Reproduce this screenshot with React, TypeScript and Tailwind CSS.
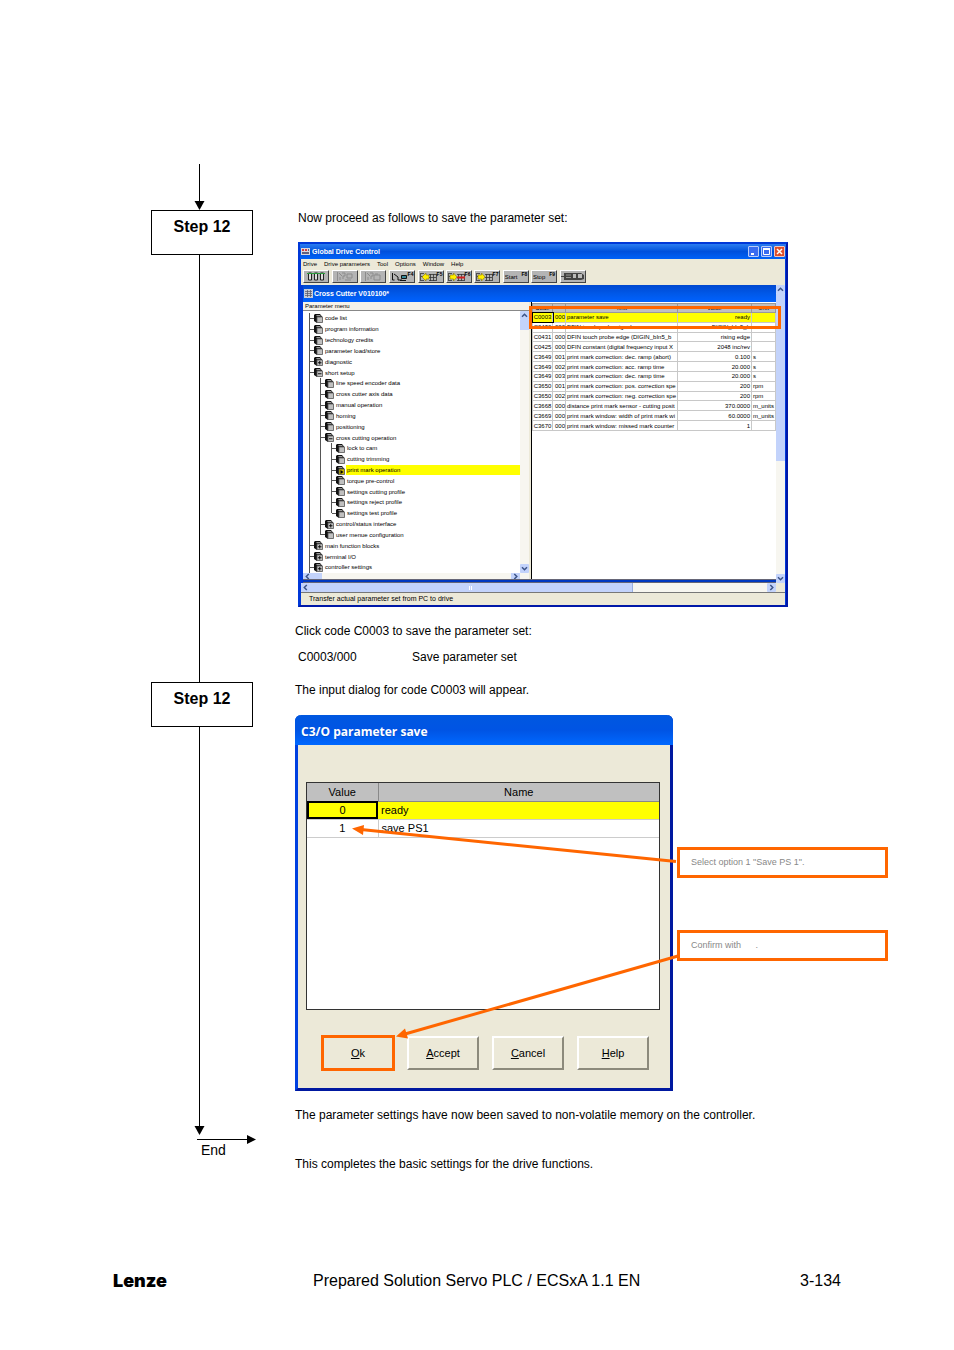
import { ReactNode } from 'react';

type TreeNode = { label: string; depth: number; sign?: '+' | '-'; last?: boolean; active?: boolean };

const tree: TreeNode[] = [
    { label: 'code list', depth: 0 },
    { label: 'program information', depth: 0 },
    { label: 'technology credits', depth: 0 },
    { label: 'parameter load/store', depth: 0 },
    { label: 'diagnostic', depth: 0, sign: '+' },
    { label: 'short setup', depth: 0, sign: '-' },
    { label: 'line speed encoder data', depth: 1 },
    { label: 'cross cutter axis data', depth: 1 },
    { label: 'manual operation', depth: 1 },
    { label: 'homing', depth: 1 },
    { label: 'positioning', depth: 1 },
    { label: 'cross cutting operation', depth: 1, sign: '-' },
    { label: 'lock to cam', depth: 2 },
    { label: 'cutting trimming', depth: 2 },
    { label: 'print mark operation', depth: 2, active: true },
    { label: 'torque pre-control', depth: 2 },
    { label: 'settings cutting profile', depth: 2 },
    { label: 'settings reject profile', depth: 2 },
    { label: 'settings test profile', depth: 2, last: true },
    { label: 'control/status interface', depth: 1, sign: '+' },
    { label: 'user menue configuration', depth: 1, last: true },
    { label: 'main function blocks', depth: 0, sign: '+' },
    { label: 'terminal I/O', depth: 0, sign: '+' },
    { label: 'controller settings', depth: 0, sign: '+' },
];

const codes = [
    ['C0003', '000', 'parameter save', 'ready', ''],
    ['C0430', '000', 'DFIN touch probe signal source', 'DIGIN_bIn5_b', ''],
    ['C0431', '000', 'DFIN touch probe edge (DIGIN_bIn5_b', 'rising edge', ''],
    ['C0425', '000', 'DFIN constant (digital frequency input X', '2048 inc/rev', ''],
    ['C3649', '001', 'print mark correction: dec. ramp (abort)', '0.100', 's'],
    ['C3649', '002', 'print mark correction: acc. ramp time', '20.000', 's'],
    ['C3649', '003', 'print mark correction: dec. ramp time', '20.000', 's'],
    ['C3650', '001', 'print mark correction: pos. correction spe', '200', 'rpm'],
    ['C3650', '002', 'print mark correction: neg. correction spe', '200', 'rpm'],
    ['C3668', '000', 'distance print mark sensor - cutting posit', '370.0000', 'm_units'],
    ['C3669', '000', 'print mark window: width of print mark wi', '60.0000', 'm_units'],
    ['C3670', '000', 'print mark window: missed mark counter', '1', ''],
];

const menus = ['Drive', 'Drive parameters', 'Tool', 'Options', 'Window', 'Help'];

// ---------------- Flow chart column ---------------- //
function ArrowDown() {
    return <div className="flex flex-1 flex-col items-center pr-[6px]">
        <div className="w-px flex-1 bg-black" />
        <svg className="block" width="11" height="9" viewBox="0 0 11 9"><path d="M0.5 0h10L5.5 9z" /></svg>
    </div>;
}

function StepBox({ children }: { children: ReactNode }) {
    return <h2 className="h-[45px] border border-black pt-[6px] text-center text-base leading-5 font-bold">{children}</h2>;
}

// ---------------- Window parts ---------------- //
const chevrons = {
    up: 'M1 4.8L3.5 2.3L6 4.8',
    down: 'M1 2.3L3.5 4.8L6 2.3',
    left: 'M4.8 1L2.3 3.5L4.8 6',
    right: 'M2.3 1L4.8 3.5L2.3 6',
};

function ScrollButton({ to }: { to: keyof typeof chevrons }) {
    return <button type="button" aria-label={'Scroll ' + to} className="flex size-[9px] shrink-0 items-center justify-center rounded-[1px] bg-[#c3d3fb]">
        <svg width="7" height="7" viewBox="0 0 7 7" fill="none" stroke="#3c5488" strokeWidth="1.5"><path d={chevrons[to]} /></svg>
    </button>;
}

function NodeIcon({ sign, active }: { sign?: string; active?: boolean }) {
    return <svg className="shrink-0" width="9" height="9" viewBox="0 0 9 9">
        <path d="M0 1L1 0h5l2 2.500v1H3V9L0 7z" fill="#111" />
        <path d="M2 1h4l1 1.200H3z" fill="#999" />
        <rect x="3" y="3" width="5.500" height="5.500" fill={active ? '#c8b800' : '#c0c0c0'} stroke="#555" strokeWidth=".8" />
        {sign && <path d={sign === '+' ? 'M4 5.750h3.500M5.750 4v3.500' : 'M4 5.750h3.500'} stroke="#000" strokeWidth=".9" />}
        {active && <path d="M4.500 4v4l3-2z" fill="#000" />}
    </svg>;
}

function TreeRow({ node }: { node: TreeNode }) {
    return <li className="flex min-h-0 flex-1 items-center pl-[6px]">
        {Array.from({ length: node.depth }, (_, i) => (
            <span key={i} className="w-[11px] shrink-0 self-stretch border-l border-[#555]" />
        ))}
        <span className="flex w-[5px] shrink-0 self-stretch">
            <span className={(node.last ? 'h-1/2' : 'h-full') + ' w-px bg-[#555]'} />
            <span className="h-px w-1 self-center bg-[#555]" />
        </span>
        <NodeIcon sign={node.sign} active={node.active} />
        <span className={(node.active ? 'flex-1 bg-[#ffff00] ' : '') + 'ml-px pl-px leading-[10px] whitespace-nowrap'}>{node.label}</span>
    </li>;
}

function ToolButton({ label, children }: { label: string; children: ReactNode }) {
    return <button type="button" aria-label={label} className="flex h-[13px] w-[26px] items-center justify-center border border-t-white border-r-[#444] border-b-[#444] border-l-white bg-[#b4b4b4]">
        {children}
    </button>;
}

function FKey({ children }: { children: ReactNode }) {
    return <span className="shrink-0 self-start text-[5px] leading-[6px] font-bold">{children}</span>;
}

function GridIcon({ arrow, fkey, red }: { arrow: string; fkey: string; red?: boolean }) {
    return <>
        <svg className="shrink-0" width="17" height="10" viewBox="0 0 17 10" fill="none">
            <path d="M.5 1v8M1 1.500h3M1 4.500h2M1 8.500h3M9 2.500h7M9 5.500h7M9 8.500h7M10.500 2v7M13.500 2v7M16.500 2v7" stroke="#333" strokeWidth=".8" />
            {red && <path d="M9 5.500h8" stroke="#d02020" strokeWidth="2" />}
            <path d={arrow} fill="#ffee00" stroke="#776600" strokeWidth=".5" />
        </svg>
        <FKey>{fkey}</FKey>
    </>;
}

function Toolbar() {
    return <div className="flex h-[17px] items-center gap-[3px] bg-[#ece9d8] pl-[2px]">
        <ToolButton label="Drives">
            <svg width="18" height="9" viewBox="0 0 18 9" fill="none"><path d="M1.500 1v7h3V1zM7.500 1v7h3V1zM13.500 1v7h3V1z" fill="#ddd" stroke="#222" /><path d="M0 1.500h18" stroke="#2c9a3c" /></svg>
        </ToolButton>
        <div className="flex gap-[2px]">
            <ToolButton label="Find drive">
                <svg width="18" height="9" viewBox="0 0 18 9" fill="none" stroke="#8c8c8c"><path d="M1.500 0v9M3 1l3 3M4 8V5M6 1h3v3H7v3M11 2h5v4h-5zM9 8h6" /></svg>
            </ToolButton>
            <ToolButton label="Find file">
                <svg width="18" height="9" viewBox="0 0 18 9" fill="none" stroke="#8c8c8c"><path d="M1.500 0v9M3 1l3 3M4 8V5M6 1h3v3H7v3M10 3h6v5h-6zM11 2h3" /></svg>
            </ToolButton>
        </div>
        <ToolButton label="Connect">
            <svg className="shrink-0" width="17" height="10" viewBox="0 0 17 10" fill="none"><path d="M1.500 1v7h2M3 2l4 3v3h4" stroke="#111" /><path d="M10.500 3.500h5v3h-5z" fill="#3a8a9a" stroke="#111" /><path d="M9 8.500h6" stroke="#111" /></svg>
            <FKey>F4</FKey>
        </ToolButton>
        <div className="flex gap-[2px]">
            <ToolButton label="Read code"><GridIcon fkey="F5" arrow="M2 5l4-4v2h3v4H6v2z" /></ToolButton>
            <ToolButton label="Write code"><GridIcon fkey="F6" red arrow="M9 5L5.500 1v2H2v4h3.500v2z" /></ToolButton>
            <ToolButton label="Write all"><GridIcon fkey="F7" arrow="M9 5L5.500 1v2H2v4h3.500v2z" /></ToolButton>
        </div>
        <div className="flex gap-[2px]">
            <ToolButton label="Start"><span className="mr-1">Start</span><FKey>F8</FKey></ToolButton>
            <ToolButton label="Stop"><span className="mr-1">Stop</span><FKey>F9</FKey></ToolButton>
        </div>
        <ToolButton label="Motor">
            <svg width="24" height="9" viewBox="0 0 24 9"><path d="M0 4h3V1h17l3 2v4l-3 1H3V5H0z" fill="#444" /><path d="M5 3h5M5 5.500h5" stroke="#999" /><path d="M12 2h3v4h-3zM17 2h4v4h-4z" fill="#bbb" /></svg>
        </ToolButton>
    </div>;
}

function TreePane() {
    return <div className="flex w-[226px] shrink-0 flex-col bg-white">
        <div className="h-[9px] border-b border-[#888] bg-[#f4f2ea] pl-[2px] leading-[8px]">Parameter menu</div>
        <div className="flex h-[262px]">
            <ul className="flex min-w-0 flex-1 flex-col overflow-hidden pt-[2px]">
                {tree.map(node => <TreeRow key={node.label} node={node} />)}
            </ul>
            <div className="flex w-[9px] flex-col bg-[#f7f6f0]">
                <ScrollButton to="up" />
                <div className="h-[10px] bg-[#c3d3fb]" />
                <div className="flex-1" />
                <ScrollButton to="down" />
            </div>
        </div>
        <div className="flex h-[6px] items-center overflow-hidden bg-[#f7f6f0]">
            <ScrollButton to="left" />
            <div className="h-full w-[10px] bg-[#c3d3fb]" />
            <div className="flex-1" />
            <ScrollButton to="right" />
            <div className="w-[9px]" />
        </div>
    </div>;
}

function CodePane() {
    return <div className="relative min-w-0 flex-1 bg-white pt-px">
        <table className="h-[128px] w-full table-fixed border-collapse leading-[8px]">
            <colgroup>
                <col className="w-[20px]" /><col className="w-[13px]" /><col className="w-[112px]" /><col /><col className="w-[24px]" />
            </colgroup>
            <thead>
                <tr className="bg-[#c0c0c0]">
                    {['Code', '', 'Text', 'Value', 'Unit'].map((title, i) => (
                        <th key={i} className="border border-[#999] p-0 font-normal">{title}</th>
                    ))}
                </tr>
            </thead>
            <tbody>
                {codes.map((row, r) => (
                    <tr key={r} className={r === 0 ? 'bg-[#ffff00]' : ''}>
                        {row.map((cell, c) => (
                            <td key={c} className={(c === 1 ? 'text-right ' : '') + (c === 3 ? 'pr-px text-right ' : '') + (c === 2 || c === 4 ? 'pl-px ' : '') + (c === 0 ? 'text-center ' : '') + (r === 0 && c === 0 ? 'outline outline-black ' : '') + 'border border-[#c8c8c8] py-0 whitespace-nowrap'}>{cell}</td>
                        ))}
                    </tr>
                ))}
            </tbody>
        </table>
        {/* highlight around code C0003 */}
        <div className="absolute top-[4px] -right-[5px] -left-[3px] h-[23px] border-3 border-[#ff6600]" />
    </div>;
}

function DriveControlWindow() {
    return <div className="ml-[3px] w-full max-w-[490px] border-2 border-[#0038d8] border-r-[#0018a8] border-b-[#0018a8] bg-[#0038d8] text-[6px]">
        <div className="flex h-[15px] items-center gap-[2px] bg-linear-to-b from-[#2a7cf0] via-[#0050dc] to-[#0062f8] pl-px text-[7px] font-bold text-white">
            <svg width="9" height="9" viewBox="0 0 9 9"><path d="M0 1h9v7H0z" fill="#d8d8e0" /><path d="M1 2h2v2H1zM4 2h2v2H4z" fill="#d04040" /><path d="M7 2h1v2H7zM1 5h7v2H1z" fill="#606080" /></svg>
            <span className="flex-1">Global Drive Control</span>
            <div className="flex gap-[2px] pr-px">
                <button type="button" aria-label="Minimize" className="size-[11px] rounded-[1px] border border-[#b8ccf8] bg-[#3a6cf0]"><svg width="9" height="9" viewBox="0 0 9 9"><path d="M2 6h3v2H2z" fill="#fff" /></svg></button>
                <button type="button" aria-label="Maximize" className="size-[11px] rounded-[1px] border border-[#b8ccf8] bg-[#3a6cf0]"><svg width="9" height="9" viewBox="0 0 9 9"><path d="M1.500 2h6v5.500h-6z" fill="none" stroke="#fff" /><path d="M1 2h7" stroke="#fff" strokeWidth="2" /></svg></button>
                <button type="button" aria-label="Close" className="size-[11px] rounded-[1px] border border-[#f0c8c0] bg-[#e0502c]"><svg width="9" height="9" viewBox="0 0 9 9"><path d="M2 2l5 5M7 2L2 7" stroke="#fff" strokeWidth="1.500" /></svg></button>
            </div>
        </div>
        <div className="mx-px">
            <nav className="flex h-[9px] items-center gap-[7px] bg-[#ece9d8] pl-[2px]">
                {menus.map(menu => <a key={menu} href="#">{menu}</a>)}
            </nav>
            <Toolbar />
            <div className="flex">
                <div className="min-w-0 flex-1 pl-[2px]">
                    <div className="flex h-[17px] items-center gap-px bg-linear-to-b from-[#0048d0] via-[#0058e8] to-[#0062ff] pl-px text-[7px] font-bold text-white">
                        <svg width="9" height="9" viewBox="0 0 9 9"><path d="M0 0h9v9H0z" fill="#c8ccd8" /><path d="M1 2.500h7M1 4.500h7M1 6.500h7M3.500 1v7M6.500 1v7" stroke="#556" strokeWidth=".7" /></svg>
                        <span>Cross Cutter V010100*</span>
                    </div>
                    <div className="flex">
                        <TreePane />
                        <div className="w-[3px] border-r border-black bg-[#ece9d8]" />
                        <CodePane />
                    </div>
                    <div className="h-[4px] border-y border-[#667] bg-[#0038c0]" />
                </div>
                <div className="flex w-[9px] flex-col bg-[#f7f6f0]">
                    <ScrollButton to="up" />
                    <div className="h-[167px] bg-[#c3d3fb]" />
                    <div className="flex-1" />
                    <ScrollButton to="down" />
                </div>
            </div>
            <div className="flex h-[9px] bg-[#f7f6f0]">
                <ScrollButton to="left" />
                <div className="flex w-2/3 items-center justify-center gap-px border-r border-[#9ab0e0] bg-[#c3d3fb]">
                    <span className="h-1 w-px bg-white" /><span className="h-1 w-px bg-white" />
                </div>
                <div className="flex-1" />
                <ScrollButton to="right" />
                <div className="w-[9px] bg-[#ece9d8]" />
            </div>
            <div className="h-[13px] border-t border-[#777] bg-[#ece9d8] pl-[8px] text-[7px] leading-[12px]">Transfer actual parameter set from PC to drive</div>
        </div>
    </div>;
}

// ---------------- Input dialog ---------------- //
function DialogButton({ text, highlighted }: { text: string; highlighted?: boolean }) {
    return <button type="button" className={(highlighted ? 'outline-3 -outline-offset-2 outline-[#ff6600] ' : '') + 'h-[34px] w-[72px] border-2 border-t-white border-r-[#8c8a7c] border-b-[#8c8a7c] border-l-white'}>
        <span className="underline">{text[0]}</span>{text.slice(1)}
    </button>;
}

function SaveDialog() {
    return <div className="w-[378px] shrink-0 rounded-t-[6px] border-3 border-t-0 border-[#0040e0] border-r-[#0018a0] border-b-[#0018a0] bg-[#ece9d8] text-[11px] leading-4">
        <div className="-mx-[3px] flex h-[30px] items-center rounded-t-[6px] bg-linear-to-b from-[#0058e0] via-[#0054e4] to-[#0068ff] pt-1 pl-[6px] font-['Open_Sans',sans-serif] text-xs font-bold text-white text-shadow-2xs">C3/O parameter save</div>
        <div className="pt-[37px] pr-[10px] pb-[18px] pl-[8px]">
            <div className="h-[228px] border border-[#333] bg-white">
                <table className="w-full table-fixed border-collapse">
                    <thead>
                        <tr className="h-[18px] bg-[#c0c0c0]">
                            <th className="w-[71px] border-r border-b border-[#888] p-0 font-normal">Value</th>
                            <th className="border-b border-[#888] p-0 font-normal">Name</th>
                        </tr>
                    </thead>
                    <tbody>
                        <tr className="h-[18px] bg-[#ffff00]">
                            <td className="border-b border-[#ccc] p-0 text-center outline-2 -outline-offset-2 outline-black">0</td>
                            <td className="border-b border-[#ccc] p-0 pl-[3px]">ready</td>
                        </tr>
                        <tr className="h-[18px]">
                            <td className="border-r border-b border-[#ccc] p-0 text-center">1</td>
                            <td className="border-b border-[#ccc] p-0 pl-[3px]">save PS1</td>
                        </tr>
                    </tbody>
                </table>
            </div>
            <div className="mt-[26px] flex gap-[13px] pl-[16px]">
                <DialogButton text="Ok" highlighted />
                <DialogButton text="Accept" />
                <DialogButton text="Cancel" />
                <DialogButton text="Help" />
            </div>
        </div>
    </div>;
}

function Callout({ children }: { children: ReactNode }) {
    return <p className="h-[31px] border-3 border-[#ff6600] bg-white pl-[11px] text-[9px] leading-[25px] text-[#888]">{children}</p>;
}

function DialogFigure() {
    return <div className="relative flex gap-1">
        <SaveDialog />
        <div className="flex max-w-[211px] flex-1 flex-col gap-[52px] pt-[132px]">
            <Callout>Select option 1 "Save PS 1".</Callout>
            <Callout>Confirm with <span className="inline-block w-[12px]" />.</Callout>
        </div>
        {/* pointers from the callouts into the dialog */}
        <svg className="pointer-events-none absolute top-0 left-0" width="384" height="376" viewBox="0 0 384 376" fill="#ff6600">
            <path d="M381 146.500L66 114.500M383 241L110 319" fill="none" stroke="#ff6600" strokeWidth="3" />
            <path d="M57 113.500L69 110L68 120zM101 321.500L110 313.500L113 323.500z" />
        </svg>
    </div>;
}

function Footer() {
    return <footer className="mt-[99px] flex items-center px-[113px] text-base leading-5">
        <span className="w-[200px] font-['Inter',sans-serif] text-lg leading-4 font-black">Lenze</span>
        <span className="flex-1">Prepared Solution Servo PLC / ECSxA 1.1 EN</span>
        <span>3-134</span>
    </footer>;
}

function App() {
    return (
        <div className="min-h-screen bg-white pt-[164px] font-['Liberation_Sans',Arial,sans-serif] text-black">
            <main className="grid grid-cols-[102px_1fr] gap-x-[42px] pr-[66px] pl-[151px]">
                <div className="flex flex-col">
                    <div className="flex h-[46px]"><ArrowDown /></div>
                    <StepBox>Step 12</StepBox>
                    <div className="flex flex-1 justify-center pr-[6px]"><div className="w-px bg-black" /></div>
                </div>
                <section className="pt-[44px] text-xs leading-5">
                    <p className="mb-[14px] pl-[3px]">Now proceed as follows to save the parameter set:</p>
                    <DriveControlWindow />
                    <p className="mt-[14px]">Click code C0003 to save the parameter set:</p>
                    <dl className="mt-[6px] mb-[15px] grid grid-cols-[114px_1fr] pl-[3px]">
                        <dt>C0003/000</dt><dd>Save parameter set</dd>
                    </dl>
                </section>
                <div className="flex flex-col">
                    <StepBox>Step 12</StepBox>
                    <div className="flex flex-1"><ArrowDown /></div>
                    <div className="ml-[46px] flex w-[59px] items-center">
                        <div className="h-px flex-1 bg-black" />
                        <svg width="9" height="9" viewBox="0 0 9 9"><path d="M0 0v9l9-4.500z" /></svg>
                    </div>
                    <p className="mb-[16px] pl-[50px] text-sm leading-3">End</p>
                </div>
                <section className="text-xs leading-4">
                    <p className="mb-[17px]">The input dialog for code C0003 will appear.</p>
                    <DialogFigure />
                    <p className="mt-[16px]">The parameter settings have now been saved to non-volatile memory on the controller.</p>
                    <p className="mt-[33px]">This completes the basic settings for the drive functions.</p>
                </section>
            </main>
            <Footer />
        </div>
    );
}

export default App;
